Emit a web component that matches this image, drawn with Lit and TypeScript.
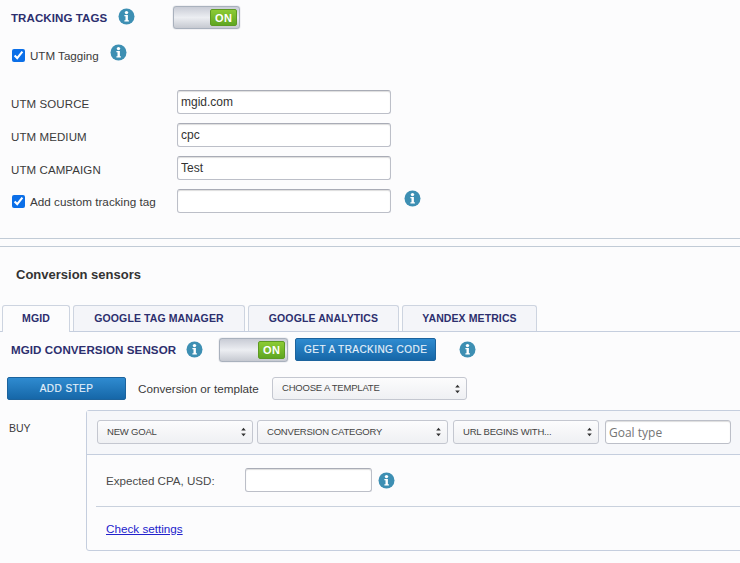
import { LitElement, html, css, svg } from "lit";
import { customElement } from "lit/decorators.js";

const info = html`<svg class="info" width="17" height="17" viewBox="0 0 17 17"><circle cx="8.5" cy="8.5" r="8" fill="#3d8fb3"/><circle cx="8.5" cy="4.6" r="1.7" fill="#fff"/><path d="M6.4 7h3.5v5.2h1v1.3H6.4v-1.3h1.1V8.3H6.4z" fill="#fff"/></svg>`;
const arrows = svg`<path d="M3.2 4.6 5.5 1.7 7.8 4.6zM3.2 7.4 5.5 10.3 7.8 7.4z" fill="#333"/>`;
const sel = (t: string, cls: string) => html`<div class="select ${cls}"><span>${t}</span><svg width="11" height="12" viewBox="0 0 11 12">${arrows}</svg></div>`;
const toggle = html`<div class="toggle"><span class="on">ON</span></div>`;

@customElement("app-root")
export class AppRoot extends LitElement {
  static styles = css`
    :host { display: block; width: 740px; height: 563px; overflow: hidden; background: #fcfcfd; font-family: "Liberation Sans", Arial, sans-serif; color: #333; font-size: 12px; }
    .info { display: block; flex: none; }
    .row { display: flex; align-items: center; }
    .head { font-weight: 700; color: #2c2f6e; font-size: 11.5px; letter-spacing: .1px; white-space: nowrap; }
    .top { height: 23px; margin-top: 6px; padding-left: 11px; }
    .top .info { margin-left: 11px; margin-top: -3px; }
    .top .toggle { margin-left: 38px; }
    .toggle { width: 67px; height: 23px; box-sizing: border-box; border: 1px solid #a9b1bd; border-radius: 3px; background: linear-gradient(#c9ccd6, #eceef2 50%, #c6c9d1); display: flex; justify-content: flex-end; padding: 2px; box-shadow: 0 0 1px #8a93a0; }
    .on { width: 27px; border: 1px solid #5d9a22; border-radius: 2px; background: linear-gradient(#8ccb34, #5fa622); color: #fff; font-weight: 700; font-size: 11px; letter-spacing: .5px; text-align: center; line-height: 17px; box-sizing: border-box; }
    .check { display: flex; align-items: center; gap: 5px; font-size: 11.6px; color: #3a3a3a; white-space: nowrap; }
    .check input { width: 13px; height: 13px; margin: 0; accent-color: #0b6fe8; }
    .utm { margin-top: 13px; height: 26px; padding-left: 12px; align-items: center; }
    .utm .info { margin-left: 11px; margin-top: -6px; }
    .form { display: grid; grid-template-columns: 166px 214px 17px; column-gap: 0; row-gap: 9px; margin-top: 22px; padding-left: 11px; align-items: center; }
    .form > label { font-size: 11.5px; padding-top: 4px; color: #3a3a3a; letter-spacing: .1px; }
    .form > label.check { font-size: 11.7px; padding-top: 0; margin-left: 1px; letter-spacing: .02px; }
    .form .info { margin-left: 13px; margin-top: -5px; }
    .input { box-sizing: border-box; width: 214px; height: 24px; border: 1px solid #bcbfc8; border-top-color: #a9acb6; border-radius: 3px; background: #fff; font: 12px "Liberation Sans", Arial, sans-serif; letter-spacing: 0; color: #333; padding: 0 3px 0 3px; outline: none; box-shadow: inset 0 1px 1px #ddd; }
    .dividers { margin-top: 25px; border-top: 1px solid #c1cbd6; border-bottom: 1px solid #c1cbd6; height: 7px; }
    h2 { margin: 20px 0 0 16px; font-size: 13px; line-height: 16px; font-weight: 700; color: #333; }
    .tabs { display: flex; gap: 3px; margin-top: 22px; padding-left: 2px; border-bottom: 1px solid #c5cede; height: 26px; }
    .tab { box-sizing: border-box; height: 26px; border: 1px solid #cdd4e0; border-bottom: 0; border-radius: 3px 3px 0 0; background: #f4f5f9; font-weight: 700; font-size: 10.5px; color: #2c2f6e; text-align: center; line-height: 25px; letter-spacing: .1px; white-space: nowrap; }
    .tab.active { background: #fcfcfd; height: 27px; position: relative; }
    .sensor { height: 25px; margin-top: 5px; padding-left: 11px; }
    .sensor .head { font-size: 11.55px; }
    .sensor .info { margin-left: 10px; }
    .sensor .toggle { margin-left: 16px; width: 69px; height: 24px; }
    .btn { box-sizing: border-box; height: 23px; border: 1px solid #1c639d; border-radius: 2px; background: linear-gradient(#2f8bd0, #1667a8); color: #e4f0fa; font-weight: 400; font-size: 10px; letter-spacing: .45px; -webkit-text-stroke: .15px #e4f0fa; display: flex; align-items: center; justify-content: center; white-space: nowrap; }
    .sensor .btn { width: 141px; margin-left: 7px; }
    .sensor .btn + .info { margin-left: 23px; }
    .step { height: 23px; margin-top: 15px; padding-left: 7px; }
    .step .btn { width: 119px; }
    .step .lbl { margin-left: 12px; width: 134px; color: #3a3a3a; font-size: 11.7px; }
    .select { box-sizing: border-box; height: 24px; border: 1px solid #c4c7d0; border-radius: 3px; background: linear-gradient(#fcfcfd, #eff0f3); display: flex; align-items: center; justify-content: space-between; padding: 0 3px 2px 9px; font-size: 9.5px; color: #444; letter-spacing: -.2px; white-space: nowrap; flex: none; }
    .select svg { margin-top: 2px; }
    .s-tpl { width: 195px; height: 23px; }
    .s-a { width: 156px; }
    .s-b { width: 191px; }
    .s-c { width: 146px; margin-left: 1px; }
    .buy-row { display: flex; margin-top: 10px; }
    .buy { width: 86px; box-sizing: border-box; padding: 12px 0 0 9px; font-size: 10.5px; color: #3a3a3a; flex: none; }
    .panel { flex: none; width: 670px; height: 141px; box-sizing: border-box; border: 1px solid #c5cede; border-radius: 3px; }
    .p-head { height: 44px; box-sizing: border-box; background: #f6f7fa; border-bottom: 1px solid #c5cede; display: flex; align-items: center; gap: 4px; padding: 0 0 1px 10px; }
    .p-head .goal { box-sizing: border-box; width: 126px; height: 24px; flex: none; margin-left: 2px; font: 12px "Open Sans", sans-serif; padding: 0 4px 0 3px; border: 1px solid #bcbfc8; border-radius: 3px; background: #fff; outline: none; box-shadow: inset 0 1px 1px #ddd; }
    .p-head .goal::placeholder { color: #757575; opacity: 1; }
    .cpa { height: 52px; box-sizing: border-box; padding: 0 0 1px 10px; margin: 0 0 0 9px; border-bottom: 1px solid #c9d1dd; display: flex; align-items: center; color: #4a4a4a; font-size: 11.6px; }
    .cpa span { width: 139px; }
    .cpa .input { width: 127px; padding: 0; }
    .cpa .info { margin-left: 6px; }
    .foot { padding: 15px 0 0 19px; line-height: 14px; }
    a { color: #2222cc; text-decoration: underline; font-size: 11.7px; }
  `;
  render() {
    return html`
      <div class="row top"><span class="head">TRACKING TAGS</span>${info}${toggle}</div>
      <div class="row utm"><label class="check"><input type="checkbox" checked />UTM Tagging</label>${info}</div>
      <div class="form">
        <label>UTM SOURCE</label><input class="input" .value=${"mgid.com"} /><span></span>
        <label>UTM MEDIUM</label><input class="input" .value=${"cpc"} /><span></span>
        <label>UTM CAMPAIGN</label><input class="input" .value=${"Test"} /><span></span>
        <label class="check"><input type="checkbox" checked />Add custom tracking tag</label><input class="input" />${info}
      </div>
      <div class="dividers"></div>
      <h2>Conversion sensors</h2>
      <div class="tabs">
        <div class="tab active" style="width:68px">MGID</div>
        <div class="tab" style="width:172px">GOOGLE TAG MANAGER</div>
        <div class="tab" style="width:151px">GOOGLE ANALYTICS</div>
        <div class="tab" style="width:135px">YANDEX METRICS</div>
      </div>
      <div class="row sensor"><span class="head">MGID CONVERSION SENSOR</span>${info}${toggle}<div class="btn">GET A TRACKING CODE</div>${info}</div>
      <div class="row step"><div class="btn">ADD STEP</div><span class="lbl">Conversion or template</span>${sel("CHOOSE A TEMPLATE", "s-tpl")}</div>
      <div class="buy-row">
        <div class="buy">BUY</div>
        <div class="panel">
          <div class="p-head">${sel("NEW GOAL", "s-a")}${sel("CONVERSION CATEGORY", "s-b")}${sel("URL BEGINS WITH...", "s-c")}<input class="goal" placeholder="Goal type" /></div>
          <div class="cpa"><span>Expected CPA, USD:</span><input class="input" />${info}</div>
          <div class="foot"><a href="#">Check settings</a></div>
        </div>
      </div>
    `;
  }
}
